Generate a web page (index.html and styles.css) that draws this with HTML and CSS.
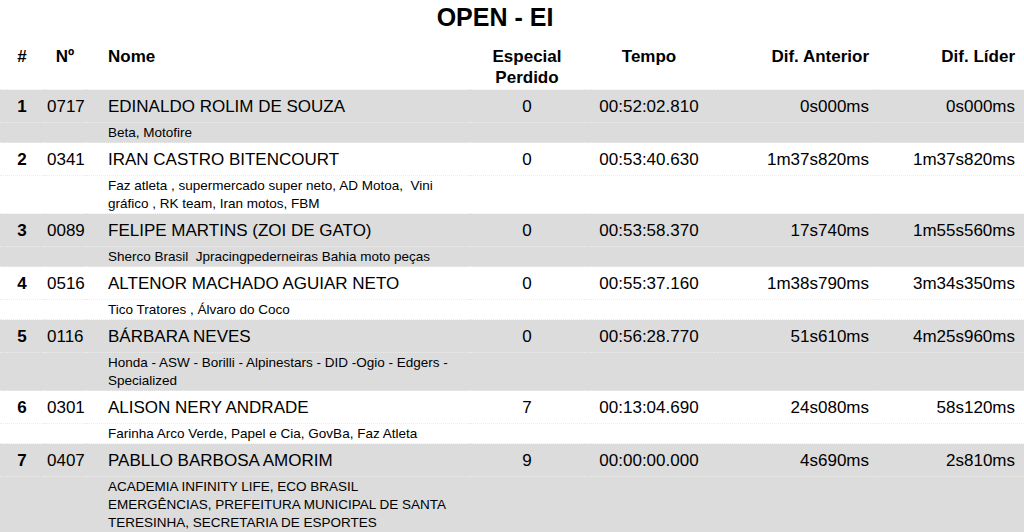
FILE: index.html
```html
<!DOCTYPE html>
<html lang="pt-BR">
<head>
<meta charset="utf-8">
<title>OPEN - EI</title>
<link rel="stylesheet" href="styles.css">
</head>
<body>
<h1 class="title">OPEN - EI</h1>
<table class="results">
  <colgroup>
    <col class="c-pos"><col class="c-num"><col class="c-name"><col class="c-esp"><col class="c-time"><col class="c-dif"><col class="c-lider">
  </colgroup>
  <thead>
    <tr>
      <th class="pos">#</th>
      <th class="num">Nº</th>
      <th class="name">Nome</th>
      <th class="esp">Especial Perdido</th>
      <th class="time">Tempo</th>
      <th class="dif">Dif. Anterior</th>
      <th class="lider">Dif. Líder</th>
    </tr>
  </thead>
  <tbody>
    <tr class="main odd">
      <td class="pos">1</td><td class="num">0717</td><td class="name">EDINALDO ROLIM DE SOUZA</td><td class="esp">0</td><td class="time">00:52:02.810</td><td class="dif">0s000ms</td><td class="lider">0s000ms</td>
    </tr>
    <tr class="sub odd">
      <td></td><td></td><td class="name">Beta, Motofire</td><td colspan="4"></td>
    </tr>
    <tr class="main">
      <td class="pos">2</td><td class="num">0341</td><td class="name">IRAN CASTRO BITENCOURT</td><td class="esp">0</td><td class="time">00:53:40.630</td><td class="dif">1m37s820ms</td><td class="lider">1m37s820ms</td>
    </tr>
    <tr class="sub">
      <td></td><td></td><td class="name">Faz atleta , supermercado super neto, AD Motoa,&nbsp; Vini gráfico , RK team, Iran motos, FBM</td><td colspan="4"></td>
    </tr>
    <tr class="main odd">
      <td class="pos">3</td><td class="num">0089</td><td class="name">FELIPE MARTINS (ZOI DE GATO)</td><td class="esp">0</td><td class="time">00:53:58.370</td><td class="dif">17s740ms</td><td class="lider">1m55s560ms</td>
    </tr>
    <tr class="sub odd">
      <td></td><td></td><td class="name">Sherco Brasil&nbsp; Jpracingpederneiras Bahia moto peças</td><td colspan="4"></td>
    </tr>
    <tr class="main">
      <td class="pos">4</td><td class="num">0516</td><td class="name">ALTENOR MACHADO AGUIAR NETO</td><td class="esp">0</td><td class="time">00:55:37.160</td><td class="dif">1m38s790ms</td><td class="lider">3m34s350ms</td>
    </tr>
    <tr class="sub">
      <td></td><td></td><td class="name">Tico Tratores , Álvaro do Coco</td><td colspan="4"></td>
    </tr>
    <tr class="main odd">
      <td class="pos">5</td><td class="num">0116</td><td class="name">BÁRBARA NEVES</td><td class="esp">0</td><td class="time">00:56:28.770</td><td class="dif">51s610ms</td><td class="lider">4m25s960ms</td>
    </tr>
    <tr class="sub odd">
      <td></td><td></td><td class="name">Honda - ASW - Borilli - Alpinestars - DID -Ogio - Edgers - Specialized</td><td colspan="4"></td>
    </tr>
    <tr class="main">
      <td class="pos">6</td><td class="num">0301</td><td class="name">ALISON NERY ANDRADE</td><td class="esp">7</td><td class="time">00:13:04.690</td><td class="dif">24s080ms</td><td class="lider">58s120ms</td>
    </tr>
    <tr class="sub">
      <td></td><td></td><td class="name">Farinha Arco Verde, Papel e Cia, GovBa, Faz Atleta</td><td colspan="4"></td>
    </tr>
    <tr class="main odd">
      <td class="pos">7</td><td class="num">0407</td><td class="name">PABLLO BARBOSA AMORIM</td><td class="esp">9</td><td class="time">00:00:00.000</td><td class="dif">4s690ms</td><td class="lider">2s810ms</td>
    </tr>
    <tr class="sub odd">
      <td></td><td></td><td class="name">ACADEMIA INFINITY LIFE, ECO BRASIL EMERGÊNCIAS, PREFEITURA MUNICIPAL DE SANTA TERESINHA, SECRETARIA DE ESPORTES</td><td colspan="4"></td>
    </tr>
  </tbody>
</table>
</body>
</html>
```

FILE: styles.css
```css
html, body {
  margin: 0;
  padding: 0;
  background: #ffffff;
  color: #000000;
  font-family: "Liberation Sans", Arial, Helvetica, sans-serif;
}

.title {
  margin: 0 0 9px 0;
  padding: 3px 34px 0 0;
  font-size: 25px;
  line-height: 28px;
  font-weight: bold;
  text-align: center;
}

.results {
  width: 100%;
  table-layout: fixed;
  border-collapse: collapse;
  border-spacing: 0;
}

.c-pos { width: 44px; }
.c-num { width: 42px; }
.c-name { width: 384px; }
.c-esp { width: 114px; }
.c-time { width: 130px; }
.c-dif { width: 163px; }
.c-lider { width: 147px; }

.results th {
  font-size: 17px;
  line-height: 21px;
  font-weight: bold;
  vertical-align: top;
  padding: 6px 8px 1px 8px;
}

.results td {
  padding: 0 8px;
}

.pos { text-align: center; }
.results td.pos { font-weight: bold; }
.num { text-align: center; }
.results td.num { text-align: left; padding-left: 3px; padding-right: 0; }
.results .name { text-align: left; padding-left: 22px; padding-right: 12px; }
.esp { text-align: center; }
.time { text-align: center; }
.results .dif { text-align: right; padding-right: 8px; }
.results .lider { text-align: right; padding-right: 9px; }

.main td {
  font-size: 17px;
  line-height: 20px;
  padding-top: 7px;
  padding-bottom: 5px;
  border-top: 1px dotted #ececec;
  vertical-align: top;
}

.sub td {
  font-size: 13.5px;
  line-height: 18px;
  padding-top: 1px;
  padding-bottom: 0;
  border-top: 1px dotted #ececec;
  vertical-align: top;
}

.odd {
  background: #dcdcdc;
}
```
